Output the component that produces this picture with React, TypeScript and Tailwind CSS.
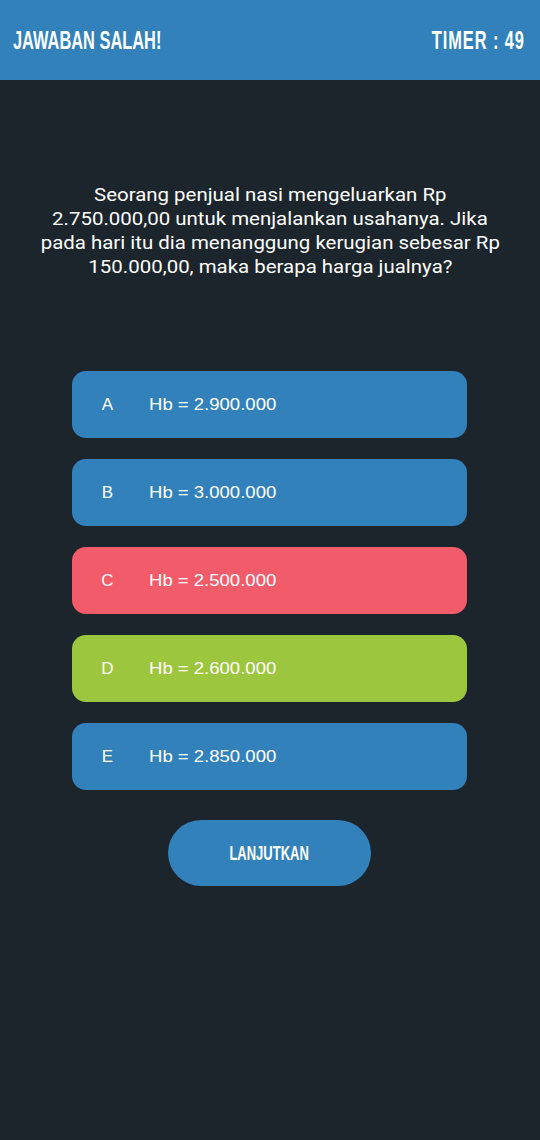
import React from "react";

const options = [
  { l: "A", t: "Hb = 2.900.000", c: "bg-[#3281bb]" },
  { l: "B", t: "Hb = 3.000.000", c: "bg-[#3281bb]" },
  { l: "C", t: "Hb = 2.500.000", c: "bg-[#f25b6a]" },
  { l: "D", t: "Hb = 2.600.000", c: "bg-[#9cc63d]" },
  { l: "E", t: "Hb = 2.850.000", c: "bg-[#3281bb]" },
];

const arial = { fontFamily: '"Liberation Sans", Arial, sans-serif' };

const lines = [
  "Seorang penjual nasi mengeluarkan Rp",
  "2.750.000,00 untuk menjalankan usahanya. Jika",
  "pada hari itu dia menanggung kerugian sebesar Rp",
  "150.000,00, maka berapa harga jualnya?",
];

export default function App() {
  return (
    <div className="w-[540px] h-[1140px] bg-[#1d252c] flex flex-col">
      <div className="h-[80px] bg-[#3281bb] flex items-center justify-between pl-[13px] pr-[15px] text-white">
        <span style={arial} className="inline-block font-bold text-[26px] leading-none scale-x-[0.63] origin-left whitespace-nowrap">
          JAWABAN SALAH!
        </span>
        <span style={arial} className="inline-block font-bold text-[26px] leading-none scale-x-[0.63] origin-right whitespace-nowrap tracking-[1.5px]">
          TIMER&nbsp;:&nbsp;49
        </span>
      </div>
      <div
        className="mt-[103px] flex flex-col items-center text-white text-[18px] leading-[24px]"
        style={{ fontFamily: "Roboto, sans-serif" }}
      >
        {lines.map((l) => (
          <span key={l} className="inline-block whitespace-nowrap scale-x-[1.135]">
            {l}
          </span>
        ))}
      </div>
      <div className="mt-[92px] flex flex-col gap-[21px] pl-[72px]">
        {options.map((o) => (
          <div
            key={o.l}
            className={`${o.c} w-[395px] h-[67px] rounded-[14px] flex items-center text-white text-[17px]`}
            style={arial}
          >
            <span className="w-[71px] text-center">{o.l}</span>
            <span className="ml-[6px] inline-block scale-x-[1.09] origin-left whitespace-nowrap">{o.t}</span>
          </div>
        ))}
      </div>
      <div className="mt-[30px] flex pl-[168px]">
        <div className="w-[203px] h-[66px] rounded-full bg-[#3281bb] flex items-center justify-center text-white">
          <span style={arial} className="inline-block font-bold text-[20px] leading-none scale-x-[0.65] whitespace-nowrap">
            LANJUTKAN
          </span>
        </div>
      </div>
    </div>
  );
}
